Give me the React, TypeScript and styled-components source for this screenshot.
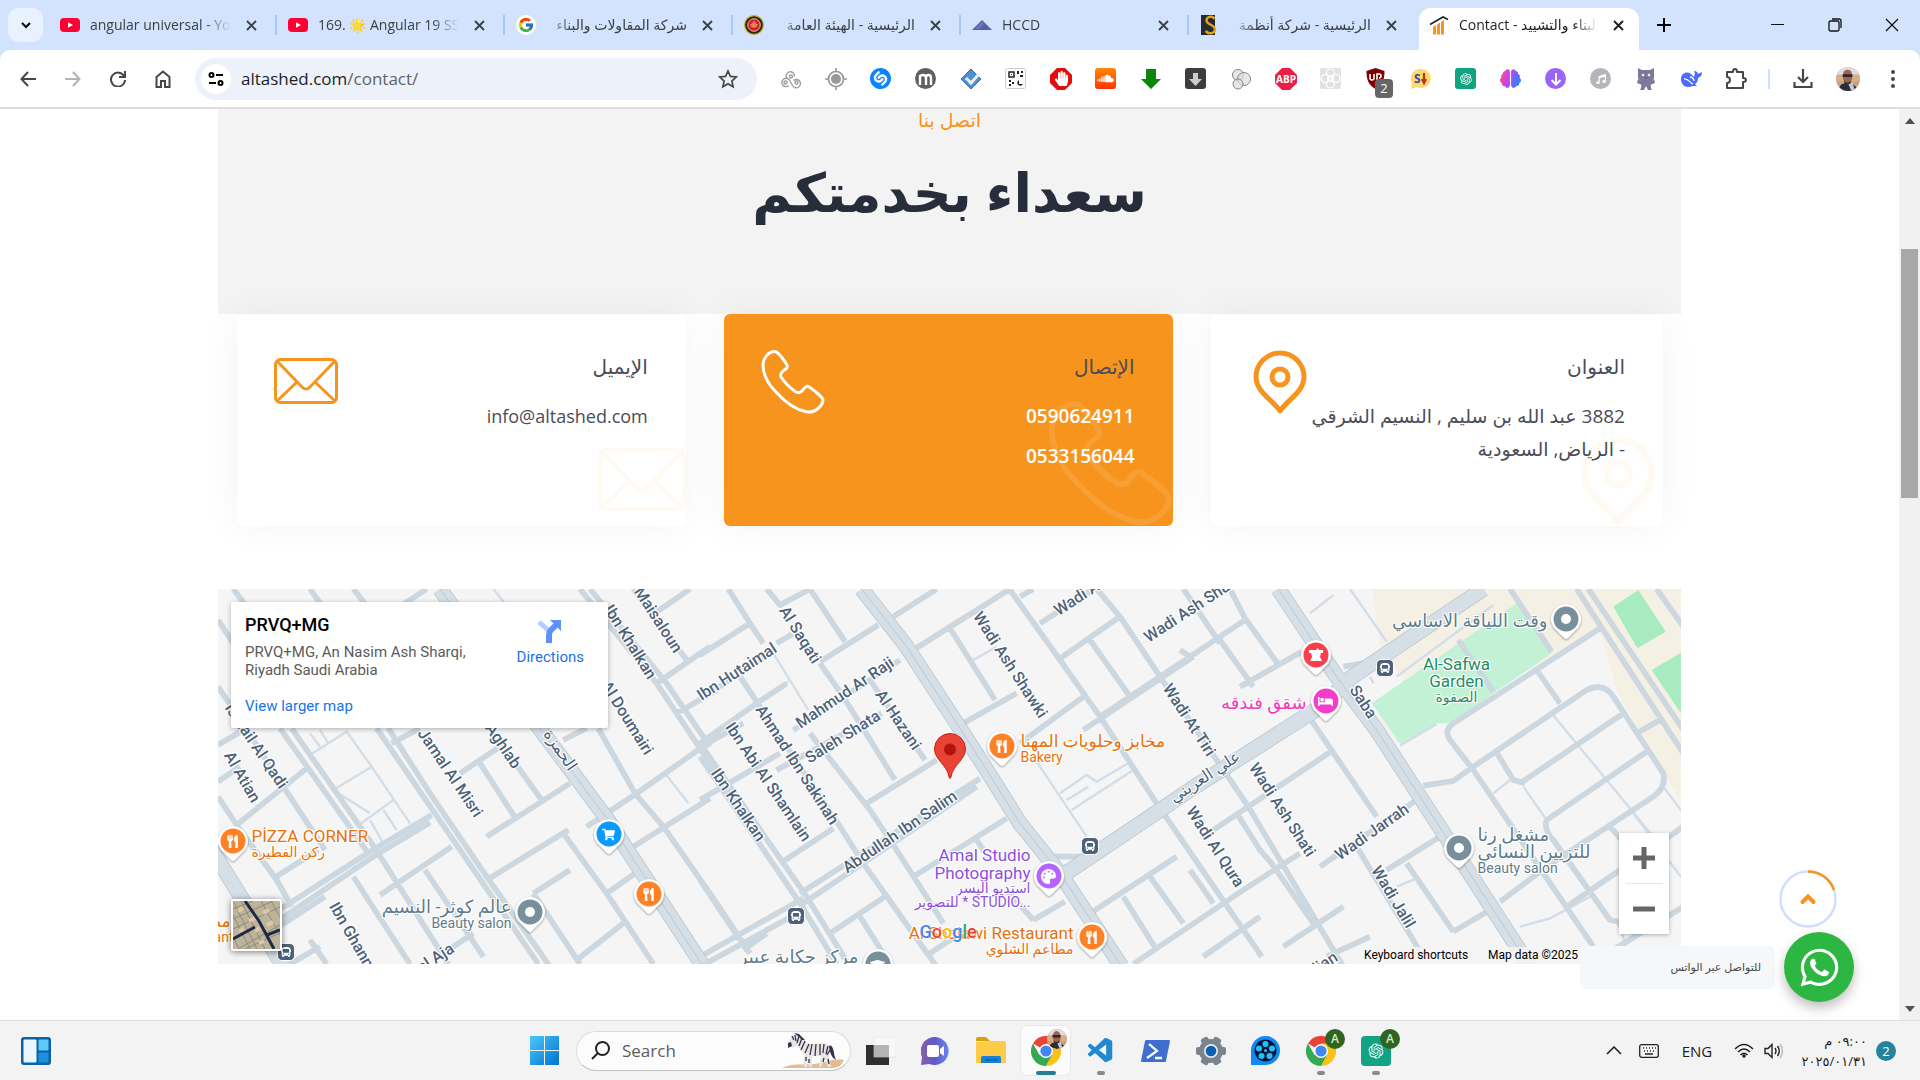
import React from "react";
import styled, { createGlobalStyle, css } from "styled-components";
import {
  FaBed,
  FaBrain,
  FaBus,
  FaHandPaper,
  FaMusic,
  FaPalette,
  FaShoppingCart,
  FaSoundcloud,
  FaUtensils,
  FaWhatsapp,
  FaGraduationCap,
} from "react-icons/fa";
import { FcGoogle } from "react-icons/fc";
import { SiShazam } from "react-icons/si";
import { RiOpenaiFill } from "react-icons/ri";
import { VscVscode } from "react-icons/vsc";

const ui = `"Open Sans", "Noto Sans", "DejaVu Sans", sans-serif`;
const mapFont = `Roboto, "DejaVu Sans", sans-serif`;
const orange = "#f7941d";

const GlobalStyle = createGlobalStyle`
  *, *::before, *::after { box-sizing: border-box; }
  body { margin: 0; font-family: ${ui}; background: #fff; overflow: hidden; }
  button { font: inherit; color: inherit; background: none; border: 0; padding: 0; cursor: pointer; }
  a { color: inherit; text-decoration: none; }
  h1, h2, h3, p { margin: 0; font-weight: 400; }
  svg { display: block; flex: none; }
`;

const Shell = styled.div`
  height: 100vh;
  display: flex;
  flex-direction: column;
`;

/* ---------- Tab strip ---------- */

const TabStrip = styled.header`
  height: 50px;
  flex: none;
  display: flex;
  background: #d3e3fd;
`;

const TabSearch = styled.button`
  width: 35px;
  height: 34px;
  margin: 8px 6px 0 8px;
  border-radius: 11px;
  background: #eaf1fe;
  display: grid;
  place-items: center;
`;

const Tab = styled.div<{ $active?: boolean; $line?: boolean }>`
  width: 228px;
  height: 34px;
  margin-top: 8px;
  padding: 0 18px 0 11px;
  display: flex;
  align-items: center;
  gap: 10px;
  font-size: 14px;
  color: #3c4043;
  position: relative;
  ${(p) =>
    p.$line &&
    css`
      &::after {
        content: "";
        position: absolute;
        right: 0;
        top: 7px;
        width: 2px;
        height: 20px;
        background: #a8c7fa;
      }
    `}
  ${(p) =>
    p.$active &&
    css`
      width: 220px;
      height: 42px;
      margin: 8px 4px 0 2px;
      padding: 0 13px 8px 10px;
      border-radius: 12px 12px 0 0;
      background: #fff;
      color: #1f1f1f;
    `}
`;

const TabTitle = styled.a<{ $rtl?: boolean }>`
  flex: 1;
  min-width: 0;
  line-height: 24px;
  overflow: hidden;
  white-space: nowrap;
  direction: ${(p) => (p.$rtl ? "rtl" : "ltr")};
  mask-image: linear-gradient(${(p) => (p.$rtl ? "to left" : "to right")}, #000 calc(100% - 26px), transparent);
`;

const TabIcon = styled.span`
  width: 20px;
  height: 20px;
  display: grid;
  place-items: center;
  flex: none;
`;

const TabClose = styled.button`
  width: 16px;
  height: 16px;
  display: grid;
  place-items: center;
  margin-left: 2px;
`;

const NewTab = styled.button`
  width: 42px;
  height: 34px;
  margin-top: 8px;
  display: grid;
  place-items: center;
`;

const WindowControls = styled.div`
  margin-left: auto;
  display: flex;
`;

const WindowButton = styled.button`
  width: 57px;
  height: 50px;
  display: grid;
  place-items: center;
`;

/* ---------- Toolbar ---------- */

const ToolbarBack = styled.div`
  flex: none;
  background: #d3e3fd;
`;

const Toolbar = styled.nav`
  height: 59px;
  padding: 0 5px;
  display: flex;
  align-items: center;
  border-bottom: 2px solid #dfdfe1;
  border-radius: 10px 10px 0 0;
  background: #fff;
`;

const Tool = styled.button`
  width: 45px;
  height: 42px;
  flex: none;
  position: relative;
  display: grid;
  place-items: center;
  color: #474747;
`;

const Omnibox = styled.div`
  flex: 1;
  height: 42px;
  margin: 0 11px 0 10px;
  padding: 0 6px;
  display: flex;
  align-items: center;
  gap: 10px;
  border-radius: 21px;
  background: #ecf1fa;
`;

const SiteInfo = styled.button`
  width: 30px;
  height: 30px;
  border-radius: 50%;
  background: #fff;
  display: grid;
  place-items: center;
`;

const Url = styled.div`
  flex: 1;
  font-size: 17px;
  line-height: 24px;
  color: #1f1f1f;
  span { color: #5f6368; }
`;

const StarButton = styled.button`
  width: 46px;
  height: 30px;
  display: grid;
  place-items: center;
  color: #474747;
`;

const ToolDivider = styled.span`
  width: 22px;
  height: 20px;
  display: grid;
  place-items: center;
  &::before { content: ""; width: 2px; height: 20px; background: #cfe0fc; }
`;

const Chip = styled.span<{ $bg: string; $round?: boolean }>`
  width: 21px;
  height: 21px;
  border-radius: ${(p) => (p.$round ? "50%" : "3px")};
  background: ${(p) => p.$bg};
  color: #fff;
  display: grid;
  place-items: center;
`;

const CountBadge = styled.span`
  position: absolute;
  right: 5px;
  bottom: 2px;
  width: 18px;
  height: 19px;
  border-radius: 4px;
  background: #666;
  color: #fff;
  font-size: 13px;
  line-height: 19px;
  text-align: center;
`;

/* ---------- Page ---------- */

const Viewport = styled.div`
  flex: 1;
  min-height: 0;
  display: flex;
`;

const Page = styled.main`
  flex: 1;
  min-width: 0;
  overflow: hidden;
  background: #fff;
`;

const Container = styled.div`
  max-width: 1463px;
  margin: 0 auto;
`;

const Hero = styled.section`
  height: 205px;
  background: #f3f3f3;
  text-align: center;
  direction: rtl;
`;

const HeroKicker = styled.p`
  color: ${orange};
  font-size: 19px;
  line-height: 22px;
`;

const HeroTitle = styled.h1`
  margin-top: 18px;
  font-size: 54px;
  line-height: 84px;
  font-weight: 700;
  color: #282d3b;
`;

const Cards = styled.section`
  display: grid;
  grid-template-columns: repeat(3, 1fr);
  gap: 38px;
  padding: 0 18px 63px 19px;
`;

const Card = styled.article<{ $filled?: boolean }>`
  position: relative;
  overflow: hidden;
  height: 212px;
  padding: 36px 38px 0 37px;
  display: flex;
  justify-content: space-between;
  border-radius: 6px;
  background: ${(p) => (p.$filled ? orange : "#fff")};
  color: ${(p) => (p.$filled ? "#fff" : "#4a4d57")};
`;

const CardShadow = styled.div`
  border-radius: 6px;
  box-shadow: 0 0 38px rgba(0, 0, 0, 0.05);
`;

const CardIcon = styled.div<{ $filled?: boolean }>`
  width: 64px;
  height: 64px;
  color: ${(p) => (p.$filled ? "#fff" : orange)};
`;

const CardBody = styled.div`
  direction: rtl;
  text-align: right;
  font-size: 19px;
  white-space: nowrap;
`;

const CardTitle = styled.h2`
  margin-bottom: 17px;
  font-size: 20px;
  line-height: 33px;
  color: #4a4d57;
`;

const CardLine = styled.p`
  line-height: 33px;
`;

const MailLink = styled.a`
  font-size: 18px;
`;

const PhoneLink = styled.a`
  display: block;
  margin-bottom: 7px;
  line-height: 33px;
  font-weight: 600;
  font-size: 19px;
`;

const Watermark = styled.div<{ $right: number; $bottom: number; $filled?: boolean }>`
  position: absolute;
  right: ${(p) => p.$right}px;
  bottom: ${(p) => p.$bottom}px;
  color: ${(p) => (p.$filled ? "#fff" : orange)};
  opacity: ${(p) => (p.$filled ? 0.1 : 0.05)};
`;

/* ---------- Map ---------- */

const MapFrame = styled.section`
  position: relative;
  height: 375px;
  overflow: hidden;
  background: #f5f5f5;
  font-family: ${mapFont};
`;

const Streets = styled.svg`
  width: 100%;
  height: 100%;
`;

type Align = "left" | "center" | "right";

const shift: Record<Align, string> = { left: "0", center: "-50%", right: "-100%" };

const MapLabel = styled.span<{
  $x: number;
  $y: number;
  $angle?: number;
  $align?: Align;
  $color?: string;
  $size?: number;
  $bold?: boolean;
}>`
  position: absolute;
  left: calc(50% - 732px + ${(p) => p.$x}px);
  top: ${(p) => p.$y}px;
  transform: translate(${(p) => shift[p.$align ?? "center"]}, -50%) rotate(${(p) => p.$angle ?? 0}deg);
  white-space: nowrap;
  font-size: ${(p) => p.$size ?? 16}px;
  font-weight: ${(p) => (p.$bold ? 500 : 400)};
  line-height: 18px;
  color: ${(p) => p.$color ?? "#4d6278"};
  text-shadow: 1px 1px 0 #fff, -1px -1px 0 #fff, 1px -1px 0 #fff, -1px 1px 0 #fff, 0 0 2px #fff;
`;

const PinSpot = styled.span<{ $x: number; $y: number }>`
  position: absolute;
  left: calc(50% - 732px + ${(p) => p.$x}px);
  top: ${(p) => p.$y}px;
  width: 32px;
  height: 38px;
  margin: -16px 0 0 -16px;
  color: #fff;
  filter: drop-shadow(0 1px 1px rgba(0, 0, 0, 0.35));
`;

const PinGlyph = styled.span`
  position: absolute;
  left: 0;
  top: 0;
  width: 32px;
  height: 32px;
  display: grid;
  place-items: center;
`;

const BusStop = styled.span<{ $x: number; $y: number }>`
  position: absolute;
  left: calc(50% - 732px + ${(p) => p.$x}px);
  top: ${(p) => p.$y}px;
  width: 18px;
  height: 18px;
  margin: -9px 0 0 -9px;
  border: 1px solid #fff;
  border-radius: 5px;
  background: #4d6278;
  color: #fff;
  display: grid;
  place-items: center;
`;

const Marker = styled.svg`
  position: absolute;
  left: calc(50% - 16px);
  top: 144px;
`;

const PlaceCard = styled.div`
  position: absolute;
  left: 13px;
  top: 13px;
  width: 377px;
  height: 126px;
  padding: 12px 15px 12px 14px;
  display: flex;
  justify-content: space-between;
  border-radius: 2px;
  background: #fff;
  box-shadow: 0 1px 5px rgba(0, 0, 0, 0.3);
  font-size: 15px;
  line-height: 18px;
  color: #5b5b5b;
`;

const PlaceName = styled.h3`
  margin-bottom: 7px;
  font-size: 18px;
  line-height: 22px;
  font-weight: 500;
  color: #000;
`;

const PlaceAddress = styled.p`
  width: 240px;
  margin-bottom: 18px;
`;

const MapLink = styled.a`
  color: #1a73e8;
`;

const Directions = styled(MapLink)`
  margin: 5px 9px 0 0;
  display: flex;
  flex-direction: column;
  align-items: center;
  gap: 5px;
`;

const Thumb = styled.button`
  position: absolute;
  left: 13px;
  top: 310px;
  width: 51px;
  height: 52px;
  border: 2px solid #fff;
  border-radius: 3px;
  overflow: hidden;
  box-shadow: 0 1px 6px rgba(0, 0, 0, 0.5);
`;

const ZoomBox = styled.div`
  position: absolute;
  right: 12px;
  top: 244px;
  width: 50px;
  display: flex;
  flex-direction: column;
  align-items: center;
  background: #fff;
  box-shadow: 0 1px 4px rgba(0, 0, 0, 0.3);
`;

const ZoomButton = styled.button`
  width: 100%;
  height: 50px;
  display: grid;
  place-items: center;
  & + & { border-top: 1px solid #e6e6e6; width: 37px; height: 51px; }
`;

const Attribution = styled.div`
  position: absolute;
  right: 0;
  bottom: 0;
  width: 321px;
  height: 17px;
  padding-left: 4px;
  display: flex;
  gap: 20px;
  background: rgba(245, 245, 245, 0.8);
  font-size: 12px;
  line-height: 17px;
  color: #000;
  white-space: nowrap;
`;

const GoogleMark = styled.div`
  position: absolute;
  left: calc(50% - 30px);
  top: 331px;
  font-size: 18px;
  font-weight: 500;
  line-height: 24px;
  text-shadow: 0 0 2px #fff, 0 0 2px #fff;
`;

const Ink = styled.span<{ $c: string }>`
  color: ${(p) => p.$c};
`;

/* ---------- Floating widgets ---------- */

const ToTop = styled.button`
  position: fixed;
  right: 83px;
  bottom: 152px;
`;

const ChatDock = styled.div`
  position: fixed;
  right: 66px;
  bottom: 78px;
  display: flex;
  align-items: center;
  gap: 9px;
`;

const ChatHint = styled.span`
  width: 195px;
  height: 43px;
  padding: 0 14px;
  border-radius: 6px;
  background: #f5f7f9;
  color: #43474e;
  font-size: 11px;
  line-height: 41px;
  direction: rtl;
  white-space: nowrap;
`;

const ChatButton = styled.a`
  width: 70px;
  height: 70px;
  border-radius: 50%;
  background: #2db742;
  color: #fff;
  display: grid;
  place-items: center;
  box-shadow: 0 6px 12px rgba(0, 0, 0, 0.25);
`;

/* ---------- Scrollbar ---------- */

const ScrollTrack = styled.div`
  width: 21px;
  flex: none;
  display: flex;
  flex-direction: column;
  align-items: center;
  background: #f1f1f1;
`;

const ScrollArrow = styled.button`
  width: 21px;
  height: 23px;
  display: grid;
  place-items: center;
`;

const ScrollThumb = styled.div`
  width: 17px;
  height: 249px;
  margin: 117px 0 auto;
  background: #a8a8a8;
`;

/* ---------- Taskbar ---------- */

const Taskbar = styled.footer`
  height: 60px;
  flex: none;
  display: grid;
  grid-template-columns: 1fr auto 1fr;
  align-items: center;
  border-top: 1px solid #dedede;
  background: #f3f3f3;
`;

const TaskLeft = styled.div`
  padding-left: 8px;
`;

const TaskCenter = styled.div`
  display: flex;
  align-items: center;
`;

const TaskCell = styled.button<{ $active?: boolean; $running?: boolean }>`
  position: relative;
  width: ${(p) => (p.$active ? 49 : 55)}px;
  height: 49px;
  margin: 0 ${(p) => (p.$active ? 3 : 0)}px;
  border-radius: 6px;
  display: grid;
  place-items: center;
  background: ${(p) => (p.$active ? "#fbfbfb" : "transparent")};
  box-shadow: ${(p) => (p.$active ? "0 0 0 1px #e8e8e8" : "none")};
  ${(p) =>
    (p.$active || p.$running) &&
    css`
      &::after {
        content: "";
        position: absolute;
        bottom: 0;
        left: 50%;
        transform: translateX(-50%);
        width: ${p.$active ? 20 : 8}px;
        height: 4px;
        border-radius: 2px;
        background: ${p.$active ? "#267f90" : "#8a8a8a"};
      }
    `}
`;

const UserBadge = styled.span<{ $bg: string }>`
  position: absolute;
  right: 3px;
  top: 3px;
  width: 20px;
  height: 20px;
  border-radius: 50%;
  overflow: hidden;
  background: ${(p) => p.$bg};
  color: #d9e8d0;
  font-size: 12px;
  line-height: 20px;
  font-weight: 600;
  text-align: center;
`;

const SearchBox = styled.label`
  width: 275px;
  height: 40px;
  margin: 0 2px 0 4px;
  padding: 0 6px 0 14px;
  display: flex;
  align-items: center;
  gap: 12px;
  border: 1px solid #dcdcdc;
  border-bottom-color: #c4c4c4;
  border-radius: 20px;
  background: #fcfcfc;
`;

const SearchInput = styled.input`
  flex: 1;
  min-width: 0;
  border: 0;
  outline: 0;
  padding: 0;
  background: none;
  font-family: ${ui};
  font-size: 17px;
  color: #5c5c5c;
  &::placeholder { color: #5c5c5c; opacity: 1; }
`;

const Tray = styled.div`
  display: flex;
  align-items: center;
  justify-content: flex-end;
  padding-right: 24px;
  color: #1b1b1b;
`;

const TrayItem = styled.button<{ $w: number }>`
  width: ${(p) => p.$w}px;
  height: 48px;
  display: grid;
  place-items: center;
  font-size: 15px;
`;

const Clock = styled.button`
  width: 80px;
  font-size: 13px;
  line-height: 20px;
  white-space: nowrap;
  span { display: block; direction: rtl; text-align: right; }
`;

const NoticeBadge = styled.button`
  width: 20px;
  height: 20px;
  margin-left: 9px;
  border-radius: 50%;
  background: #23849a;
  color: #fff;
  font-size: 13px;
  line-height: 20px;
`;

/* ---------- Drawings ---------- */

const CloseX = () => (
  <svg width="11" height="11" viewBox="0 0 11 11" stroke="currentColor" strokeWidth="1.9">
    <path d="M1 1l9 9M10 1l-9 9" />
  </svg>
);

const YouTubeMark = () => (
  <svg width="20" height="14" viewBox="0 0 20 14">
    <rect width="20" height="14" rx="4" fill="#ff0033" />
    <path d="M8 4.200l5 2.800-5 2.800z" fill="#fff" />
  </svg>
);

const GoogleRound = () => (
  <svg width="20" height="20" viewBox="0 0 20 20">
    <circle cx="10" cy="10" r="10" fill="#fff" />
    <g transform="translate(1.5 1.5)">
      <FcGoogle size={17} />
    </g>
  </svg>
);

const EmblemMark = () => (
  <svg width="20" height="20" viewBox="0 0 20 20">
    <circle cx="10" cy="10" r="9.4" fill="#2a2413" stroke="#c9b32a" strokeWidth="1.2" />
    <circle cx="10" cy="10" r="6.3" fill="#d9202a" stroke="#f2ece0" strokeWidth=".8" />
    <path d="M10 5.5l2 3 2 1-2 3H8L6 9.500l2-1z" fill="#f0834c" />
  </svg>
);

const TriangleMark = () => (
  <svg width="20" height="20" viewBox="0 0 20 20">
    <path d="M0 15L10 5l10 10z" fill="#5a5da8" />
    <path d="M3 14l7-7 2 2-5 5z" fill="#7377bd" />
  </svg>
);

const GoldSMark = () => (
  <svg width="20" height="20" viewBox="0 0 20 20">
    <rect width="14" height="20" x="1" fill="#262b33" />
    <path d="M14.500 4C13 .8 6.500 1 6.500 5.500c0 4.500 8.500 4 8.500 8.800 0 4.700-7.500 5.200-9 1.500" fill="none" stroke="#e6a21c" strokeWidth="2.400" />
  </svg>
);

const BuildMark = () => (
  <svg width="20" height="20" viewBox="0 0 20 20">
    <path d="M4 19.500V12l3-2v9.500zM8 19.500V9.500l3-2v12zM12 19.500V7l3-2v14.500z" fill={orange} />
    <path d="M1 9.500L14 2l5 2.500" fill="none" stroke="#222" strokeWidth="1.600" />
  </svg>
);

const Portrait = ({ size }: { size: number }) => (
  <svg width={size} height={size} viewBox="0 0 25 25">
    <defs>
      <clipPath id={`face${size}`}>
        <circle cx="12.500" cy="12.500" r="12.500" />
      </clipPath>
    </defs>
    <g clipPath={`url(#face${size})`}>
      <rect width="25" height="25" fill="#c9a183" />
      <rect width="25" height="8" fill="#e0dce0" />
      <path d="M0 9h8v6H0zM17 8h8v7h-8z" fill="#d8ae88" />
      <path d="M3 25c0-7 4-8 8-8s10 1 12 8z" fill="#2b2c3a" />
      <path d="M13 18l4-2 3 9h-4z" fill="#c5c8d4" />
      <ellipse cx="12" cy="9.500" rx="5" ry="7" fill="#9b664d" />
      <path d="M7 7.500h10v3H7z" fill="#2d2530" />
      <path d="M8 12.500c1 5 7 5 8 0l-1 5h-6z" fill="#3b2824" />
    </g>
  </svg>
);

const MailArt = ({ w, h }: { w: number; h: number }) => (
  <svg width={w} height={h} viewBox="0 0 64 46" fill="none" stroke="currentColor" strokeWidth="3">
    <rect x="1.500" y="1.500" width="61" height="43" rx="5" />
    <path d="M3 3l25 26c3 3 5 3 8 0L61 3M3 43l20-19M61 43L41 24" />
  </svg>
);

const PhoneArt = ({ size }: { size: number }) => (
  <svg width={size} height={size} viewBox="0 0 64 64" fill="none" stroke="currentColor" strokeWidth="3" strokeLinejoin="round">
    <path d="M13 1.500C8 1.500 2 8 2 15C2 25 8 35 15 42C24 52 35 60 46 62C55 63 62 55 62 50C62 47 50 38 48 37C46 35 43 38 41 41C39 43 37 43 35 42C29 38 24 33 20 27C19 25 20 23 22 21C25 19 27 18 26 15C23 10 18 4 16 2.500C15 1.500 14 1.500 13 1.500Z" />
  </svg>
);

const PinArt = ({ size }: { size: number }) => (
  <svg width={size} height={size} viewBox="0 0 64 64" fill="none" stroke="currentColor" strokeWidth="5">
    <path d="M32 61C25 50 8 42 8 27a24 24 0 0 1 48 0c0 15-17 23-24 34z" strokeLinejoin="round" />
    <circle cx="32" cy="27" r="8" />
  </svg>
);

const ChromeArt = () => (
  <svg width="30" height="30" viewBox="0 0 30 30">
    <path d="M15 15L2 7.500A15 15 0 0 1 28 7.500z" fill="#ea4335" />
    <path d="M2 7.500L8.500 19 15 15l6.500 3.800L15 30A15 15 0 0 1 2 7.500z" fill="#34a853" />
    <path d="M28 7.500H15V15l6.500 3.800L15 30A15 15 0 0 0 28 7.500z" fill="#fbc116" />
    <circle cx="15" cy="15" r="7" fill="#fff" />
    <circle cx="15" cy="15" r="5.600" fill="#4285f4" />
  </svg>
);

const ZebraArt = () => (
  <svg width="62" height="36" viewBox="0 0 62 36">
    <path d="M0 35c10-5 20-3 32-4 12-1 18-6 30-4-2 5-6 8-12 8z" fill="#e3bd90" />
    <path d="M6 10l4-7 4-2 5 2 7 8 14-1c6 0 9 3 9 8l-2 5 2 11h-3l-3-9-4 9h-2l2-11-9 0 0 11h-3l-1-10-1 10h-3V21l-6-8-6 2z" fill="#e9e4e4" />
    <path d="M10 3l2 4M13 2l1 6M17 3l-2 7M20 5l-3 8M23 8l-4 9M27 11l-4 9M30 11l-2 11M34 11l-1 12M38 11v11M42 11l-1 9M46 13l-2 8M48 17l-3 5M24 24v4M27 26v4M42 25l-1 4M46 26l1 5" stroke="#37304a" strokeWidth="1.300" fill="none" />
    <path d="M6 10l3-1 1 4-4 2zM12 0l5 1 6 6-3 0-4-4zM48 12c5 3 3 9 6 15-5-3-6-8-7-13z" fill="#37304a" />
  </svg>
);

const CatArt = () => (
  <svg width="20" height="22" viewBox="0 0 20 22" fill="#81779c">
    <path d="M2 0l4 2h8l4-2v9q0 3-4 4H6q-4-1-4-4z" />
    <path d="M6 12h8l1 8 1 2h-4l-2-4-2 4H4l1-2z" />
    <path d="M6 13l-4-2-1 4 5 2M14 13l4-2 1 4-5 2" />
    <circle cx="7" cy="7" r="1.300" fill="#f1eef8" />
    <circle cx="13" cy="7" r="1.300" fill="#f1eef8" />
    <path d="M9 9h2l-1 1.500z" fill="#4d4566" />
  </svg>
);

/* ---------- Map data ---------- */

const avenues = [
  "M690 27L985 440 1190 715 1475 1152",
  "M1955 27L2090 200 2240 430 2330 570 2430 730 2550 880 2735 1160",
  "M3205 27L3380 290 3500 450 3630 650 3960 1160",
  "M2560 885L2970 610 3340 375 3420 295 3820 27",
  "M0 800L80 930 220 1160",
];

const streets = `
M70 27L110 80M300 27L345 90M430 27L480 90M650 27L570 80M24 120L70 190
M210 445L475 820M245 445L500 812 715 1152M500 445L985 1152M535 445L660 640 830 890 1020 1160
M24 320L110 450 240 650 345 810M24 495L100 450M24 650L80 735 200 900 245 980M24 605L90 560M80 735L290 565
M190 895L325 810M215 985L480 815 665 705M215 1015L490 830 660 728M215 1035L345 950M510 945L725 800
M430 890L520 1030 600 1152M645 870L820 1130M830 900L1075 750M750 580L870 500M830 770L1080 610M545 490L630 445
M810 550L920 720M880 500L995 660M1060 480L1130 445M1130 740L1280 640 1500 485 1600 430M1270 800L1500 655
M1165 445L1275 640 1360 740 1500 940 1620 1120M1060 760L1190 940 1330 1152M1190 940L1290 870M970 940L1110 1152
M970 940L1080 870M1100 1140L1240 1030M1110 27L1340 310 1500 550 1620 730M1140 27L1370 310 1500 500M1340 310L1500 200M1400 400L1520 330
M1270 27L1430 240M1320 110L1440 27M240 1152L330 1100M300 1080L350 1152M700 1120L790 1060
M1555 27L1620 130 1660 190M1620 130L1470 225M1670 27L1710 75 1800 27M1800 27L1905 185M1830 245L2005 135M1700 190L1750 160
M1470 360L1700 205M1470 490L1640 370 1730 310M1590 290L1890 740 1960 850 2180 1160M1830 250L1900 350 2055 600
M1800 460L1980 690 2060 810 2200 1030M1750 450L2070 240M1700 570L2015 400M1970 670L2180 540M1470 660L1710 520
M1980 300L2145 540M1470 530L1770 970 1880 1152M1470 490L1790 950 1915 1152M1780 970L2300 620M1770 940L2310 595
M1470 1130L1780 955M1470 1160L1790 985M1710 850L1870 745M1470 900L1610 1110M1600 1110L1670 1060M1860 1060L2025 950
M1950 1010L2040 1152M2110 890L2390 715M2300 780L2340 840M2160 1120L2250 1060M2470 1020L2565 965M2390 930L2470 1020
M2050 110L2180 27M2110 210L2400 27M2260 430L2420 340M2220 145L2355 360M2400 30L2550 240 2670 410 2840 670 3155 1130
M2430 490L2620 350M2490 130L2650 27M2550 235L2730 110M2640 180L2760 350M2660 27L2730 110 2850 290 3115 680 3400 1160
M2670 410L2850 290 3105 120M2430 50L2470 27M2920 27L3030 190M2640 1000L2900 830M2740 950L2840 1110M2820 890L2920 1030
M2770 1152L3100 930 3270 820M3060 27L3105 115 3210 260M3030 180L3130 320M2940 230L2910 210M3090 320L3275 215
M2620 450L2950 230M3290 400L3500 710M3010 750L3370 510M3330 860L3620 660M3530 870L3690 770M3440 800L3640 1130
M3080 700L3150 810 3185 850 3310 1030M3220 1100L3400 980M2980 1130L3150 1010M2940 870L3010 970M3350 1130L3480 1070
M3730 1055L3840 990M3590 850L3730 1055M3745 180L3850 335M3900 27L4025 215M4100 27L4420 520M4135 27L4420 450M4340 27L4420 140
M3640 617L3730 603 3790 560 4130 330Q4180 305 4210 350L4360 580Q4370 620 4330 650L4010 860 3870 965
M4170 145L3730 430Q3700 450 3720 480L3790 570 3980 850 4150 1100M3980 270L4050 370
M3930 610L4240 400M3855 510L3910 600 3945 610M4010 720L4310 515M4010 720Q4000 750 4030 780L4200 1020 4250 1030
M4070 980L4420 740M4280 460L4350 420M4160 1140L4420 980M4200 740L4280 830M3400 260L3460 250 3520 240M2520 830L2640 830`;

const lanes = `
M300 525L410 455 485 560 600 730M485 560L370 630M370 630L480 700M300 460L330 500M330 450L355 490
M480 720L520 790M520 690L560 750M440 740L550 660M1365 580L1435 670M850 27L900 90M1280 650L1360 740
M1690 220L1795 390M1640 370L1735 305M2290 240L2360 200M2550 640L2630 585 2660 605 2755 550M2585 690L2770 570
M2470 530L2630 770M2570 660L2635 620M3300 100L3370 45M3420 27L3530 185M3560 290L3850 75M3480 290L3490 310
M3560 920L3620 895M4025 400L4330 770M3940 620L4010 720M4270 700L4420 900M3930 1040L4020 1015 4140 950M4360 620L4420 700M3850 640L3900 600
M3570 497L3680 432M4220 1020L4250 1100`;

const streetNames: [string, number, number, number][] = [
  ["Maisaloun", 440, 31, 57],
  ["Ibn Khalkan", 412, 53, 58],
  ["Al Doumairi", 409, 129, 58],
  ["Ibn Hutaimal", 519, 83, -33],
  ["Ismail Al Qadi", 38, 157, 56],
  ["Al Atian", 24, 188, 60],
  ["Jamal Al Misri", 232, 184, 56],
  ["Aghlab", 285, 157, 56],
  ["الحمزة", 342, 161, 56],
  ["Ibn Ghannam", 139, 356, 60],
  ["Bilal Aja", 210, 374, -33],
  ["Al Saqati", 582, 46, 58],
  ["Mahmud Ar Raji", 627, 104, -34],
  ["Saleh Shata", 625, 148, -32],
  ["Al Hazani", 680, 131, 56],
  ["Ahmad Ibn Sakinah", 579, 176, 57],
  ["Ibn Abi Al Shamlain", 550, 193, 56],
  ["Ibn Khalkan", 520, 216, 56],
  ["Abdullah Ibn Salim", 682, 243, -34],
  ["Wadi Ash Shawki", 792, 76, 57],
  ["Wadi Arar", 867, 4, -33],
  ["Wadi Ash Shura", 975, 19, -33],
  ["Wadi At Tiri", 971, 131, 57],
  ["علي العريني", 987, 188, -33],
  ["Saba", 1145, 113, 57],
  ["Wadi Ash Shati", 1064, 221, 57],
  ["Wadi Al Qura", 997, 258, 57],
  ["Wadi Jarrah", 1154, 243, -35],
  ["Wadi Jalil", 1175, 308, 59],
  ["Wadi Radian", 1081, 391, -33],
];

const food = "#e8710a";
const slate = "#5f7d8c";
const violet = "#8c50e0";
const park = "#1e8f63";

const places: [string, number, number, Align, string, number][] = [
  ["PİZZA CORNER", 34, 247, "left", food, 17],
  ["ركن الفطيرة", 34, 263, "left", food, 14],
  ["مطعم", 13, 332, "right", food, 17],
  ["Restaurant", 16, 348, "right", food, 14],
  ["عالم كوثر- النسيم", 294, 318, "right", slate, 18],
  ["Beauty salon", 294, 334, "right", slate, 14],
  ["مخابز وحلويات المهنا", 803, 152, "left", food, 17],
  ["Bakery", 803, 168, "left", food, 14],
  ["Amal Studio", 813, 266, "right", violet, 17],
  ["Photography", 813, 284, "right", violet, 17],
  ["استديو اليسر", 813, 299, "right", violet, 14],
  ["للتصوير * STUDIO...", 813, 313, "right", violet, 14],
  ["Al Shalawi Restaurant", 856, 344, "right", food, 17],
  ["مطاعم الشلوي", 856, 360, "right", food, 14],
  ["مركز حكاية عبير", 641, 368, "right", slate, 18],
  ["وقت اللياقة الاساسي", 1330, 32, "right", slate, 18],
  ["شقق فندقه", 1089, 114, "right", "#f538b8", 18],
  ["Al-Safwa", 1239, 75, "center", park, 17],
  ["Garden", 1239, 92, "center", park, 17],
  ["الصفوة", 1239, 108, "center", park, 14],
  ["مشغل رنا", 1260, 246, "left", slate, 18],
  ["للتزيين النسائي", 1260, 263, "left", slate, 18],
  ["Beauty salon", 1260, 279, "left", slate, 14],
];

const dot = <svg width="10" height="10"><circle cx="5" cy="5" r="5" fill="#fff" /></svg>;
const jar = (
  <svg width="16" height="16" viewBox="0 0 16 16" fill="#fff">
    <path d="M1 3h7l2-2 1 2h4v3h-2l-1 4 2 4H2l2-4-1-4H1z" />
  </svg>
);

const pins: [number, number, string, React.ReactNode][] = [
  [15, 252, "#ff8126", <FaUtensils size={13} />],
  [391, 245, "#0a99ff", <FaShoppingCart size={13} />],
  [431, 305, "#ff8126", <FaUtensils size={13} />],
  [312, 323, "#78909c", dot],
  [784, 157, "#ff8126", <FaUtensils size={13} />],
  [831, 287, "#b366ff", <FaPalette size={15} />],
  [874, 348, "#ff8126", <FaUtensils size={13} />],
  [660, 375, "#78909c", <FaGraduationCap size={15} />],
  [1348, 30, "#78909c", dot],
  [1098, 66, "#fb3e4b", jar],
  [1108, 112, "#f53dcb", <FaBed size={15} />],
  [1241, 259, "#78909c", dot],
];

const stops: [number, number][] = [
  [68, 363],
  [872, 257],
  [578, 327],
  [1167, 79],
];

const MapPanel = () => (
  <MapFrame aria-label="Map">
    <Streets viewBox="24 27 4389 1125" preserveAspectRatio="xMidYMid slice" fill="none">
      <path d="M3485 27L3510 200 3580 300 3500 400 3560 490 4170 150 4220 330 4420 680 4420 27z" fill="#f5f0e4" />
      <path d="M3485 370L3920 70 4025 220 3720 430 3680 430 3575 497z" fill="#c3f1d5" />
      <path d="M4210 80L4285 30 4367 155 4282 205zM4325 270L4420 214 4420 410z" fill="#a8ebc1" />
      <path d={lanes} stroke="#d2dde8" strokeWidth="7" />
      <path d={streets} stroke="#ccd7df" strokeWidth="17" strokeLinejoin="round" />
      {avenues.map((d) => (
        <path key={d} d={d} stroke="#b9c8d2" strokeWidth="47" strokeLinejoin="round" />
      ))}
      {avenues.map((d) => (
        <path key={d} d={d} stroke="#d6dfe6" strokeWidth="42" strokeLinejoin="round" />
      ))}
      {avenues.slice(0, 3).map((d) => (
        <path key={d} d={d} stroke="#bccad4" strokeWidth="3" />
      ))}
    </Streets>
    {streetNames.map(([name, x, y, a]) => (
      <MapLabel key={name + x} $x={x} $y={y} $angle={a} $bold>{name}</MapLabel>
    ))}
    {places.map(([name, x, y, align, color, size]) => (
      <MapLabel key={name + x} $x={x} $y={y} $align={align} $color={color} $size={size}>{name}</MapLabel>
    ))}
    {stops.map(([x, y]) => (
      <BusStop key={x} $x={x} $y={y}><FaBus size={10} /></BusStop>
    ))}
    {pins.map(([x, y, color, glyph]) => (
      <PinSpot key={x} $x={x} $y={y}>
        <svg width="32" height="38" viewBox="0 0 32 38">
          <path d="M16 1a15 15 0 0 1 9 27l-7 7q-2 2-4 0l-7-7A15 15 0 0 1 16 1z" fill="#fff" />
          <circle cx="16" cy="16" r="12.500" fill={color} />
        </svg>
        <PinGlyph>{glyph}</PinGlyph>
      </PinSpot>
    ))}
    <Marker width="32" height="46" viewBox="0 0 32 46">
      <path d="M16 .5A15.500 15.500 0 0 0 .5 16c0 11 13 16 14.500 28q1 3 2 0C18.500 32 31.500 27 31.500 16A15.500 15.500 0 0 0 16 .5z" fill="#ea4335" stroke="#c5221f" />
      <circle cx="16" cy="16.500" r="6" fill="#b31412" />
    </Marker>
    <PlaceCard>
      <div>
        <PlaceName>PRVQ+MG</PlaceName>
        <PlaceAddress>PRVQ+MG, An Nasim Ash Sharqi, Riyadh Saudi Arabia</PlaceAddress>
        <MapLink href="#map">View larger map</MapLink>
      </div>
      <Directions href="#directions">
        <svg width="26" height="24" viewBox="0 0 26 24">
          <path d="M2 3l10 9" stroke="#b3cdfd" strokeWidth="5" />
          <path d="M12 24v-8q0-3 2-5l5-5" stroke="#5c91fa" strokeWidth="6" fill="none" />
          <path d="M13 1h11v11z" fill="#5c91fa" />
        </svg>
        Directions
      </Directions>
    </PlaceCard>
    <Thumb aria-label="Show satellite imagery">
      <svg width="47" height="48" viewBox="0 0 47 48">
        <rect width="47" height="48" fill="#bdb398" />
        <path d="M0 8l20-8M0 18L40 0M0 28L47 6M5 48L47 24M12 48L47 32M0 0l24 48M8 0l24 48M28 0l19 34M38 0l9 16M0 14l17 34M0 36l6 12" stroke="#8e8a7e" strokeWidth="1" />
        <path d="M5 10l5-3M16 20l6-3M30 12l6-3M22 30l5-3M6 30l5-2M34 24l6-3M26 42l5-2" stroke="#dcc8a6" strokeWidth="4" />
        <path d="M12 0l14 20 15 28M0 38l22-12M34 34l13-5" stroke="#1d2a45" strokeWidth="3" fill="none" />
      </svg>
    </Thumb>
    <ZoomBox>
      <ZoomButton aria-label="Zoom in">
        <svg width="22" height="22" stroke="#666" strokeWidth="5"><path d="M11 0v22M0 11h22" /></svg>
      </ZoomButton>
      <ZoomButton aria-label="Zoom out">
        <svg width="22" height="22" stroke="#666" strokeWidth="5"><path d="M0 11h22" /></svg>
      </ZoomButton>
    </ZoomBox>
    <Attribution>
      <button>Keyboard shortcuts</button>
      <span>Map data ©2025</span>
    </Attribution>
    <GoogleMark>
      <Ink $c="#4285f4">G</Ink><Ink $c="#ea4335">o</Ink><Ink $c="#fbbc05">o</Ink>
      <Ink $c="#4285f4">g</Ink><Ink $c="#34a853">l</Ink><Ink $c="#ea4335">e</Ink>
    </GoogleMark>
  </MapFrame>
);

const tabs: { title: string; icon: React.ReactNode; rtl?: boolean }[] = [
  { title: "angular universal - YouTube", icon: <YouTubeMark /> },
  { title: "169. 🌟 Angular 19 SSR", icon: <YouTubeMark /> },
  { title: "شركة المقاولات والبناء", icon: <GoogleRound />, rtl: true },
  { title: "الرئيسية - الهيئة العامة", icon: <EmblemMark />, rtl: true },
  { title: "HCCD", icon: <TriangleMark /> },
  { title: "الرئيسية - شركة أنظمة", icon: <GoldSMark />, rtl: true },
];

const line = { fill: "none", stroke: "currentColor", strokeWidth: 2 } as const;

const extensions: [string, React.ReactNode][] = [
  ["Cloud rings", <svg width="22" height="20" viewBox="0 0 22 20" fill="none" stroke="#9aa0a0" strokeWidth="1.400"><path d="M7 9.500a4.200 4.200 0 1 1 7.500-2" /><circle cx="11" cy="7.500" r="1.500" /><path d="M9 16.500a4.200 4.200 0 1 1 .5-5.500l3 5.500a4.200 4.200 0 1 0 1-5" /><circle cx="5.500" cy="13.500" r="1.500" /><circle cx="16.500" cy="13.500" r="1.500" /></svg>],
  ["Locator", <svg width="22" height="22" viewBox="0 0 22 22" fill="none" stroke="#999" strokeWidth="1.700"><circle cx="11" cy="11" r="7.500" /><circle cx="11" cy="11" r="5" fill="#999" stroke="none" /><path d="M11 0v4M11 18v4M0 11h4M18 11h4" /></svg>],
  ["Shazam", <SiShazam size={21} color="#0a85ff" />],
  ["Momentum", <Chip $bg="#5f5f5f" $round><svg width="15" height="12" viewBox="0 0 15 12" fill="none" stroke="#fff" strokeWidth="2.400"><path d="M2 12V2M2 5q0-3 3-3t3 3v7M8 5q0-3 2.500-3T13 5v7" /></svg></Chip>],
  ["Checker", <svg width="22" height="22" viewBox="0 0 22 22"><path d="M11 1l10 10-10 10L1 11z" fill="#4f8fd0" stroke="#3d6fa3" /><path d="M6 10l5 5 8-9" stroke="#eee" strokeWidth="3" fill="none" /></svg>],
  ["QR code", <svg width="21" height="21" viewBox="0 0 21 21"><rect x=".5" y=".5" width="20" height="20" rx="2" fill="#fff" stroke="#ccc" /><path d="M4 4h5v5H4z" fill="none" stroke="#222" strokeWidth="1.500" /><path d="M6 6h1v1H6zM12 3h2v3h-2zM16 3h2v2h-2zM15 7h3v2h-3zM4 12h2v2H4zM7 14h2v2H7zM4 16h2v2H4z" fill="#222" /><path d="M14 12a3 3 0 1 0 4 4h-4z" fill="#222" /></svg>],
  ["Blocker", <svg width="22" height="22" viewBox="0 0 22 22"><path d="M7 0h8l7 7v8l-7 7H7l-7-7V7z" fill="#e40d0d" /><g transform="translate(4 3)"><FaHandPaper size={15} color="#fff" /></g></svg>],
  ["SoundCloud", <Chip $bg="linear-gradient(#ff8a00,#ff3300)"><FaSoundcloud size={17} /></Chip>],
  ["Green download", <svg width="22" height="22" viewBox="0 0 22 22" fill="#0b860b"><path d="M6 1h10v10h5L11 21 1 11h5z" /></svg>],
  ["Dark download", <Chip $bg="#3d3d3d"><svg width="13" height="14" viewBox="0 0 13 14" fill="#ccc"><path d="M4 1h5v6h4l-6.500 7L0 7h4z" /></svg></Chip>],
  ["Circles", <svg width="22" height="22" viewBox="0 0 22 22" fill="#ddd" fillOpacity=".7" stroke="#888"><circle cx="8" cy="7" r="5.500" /><circle cx="14" cy="11" r="6.500" /><circle cx="8" cy="16" r="5" /></svg>],
  ["Adblock Plus", <svg width="22" height="22" viewBox="0 0 22 22"><path d="M7 0h8l7 7v8l-7 7H7l-7-7V7z" fill="#ed1e45" /><text x="11" y="14.500" textAnchor="middle" fontSize="10" fontWeight="700" fill="#fff" fontFamily="Open Sans">ABP</text></svg>],
  ["Lattice", <svg width="21" height="21" viewBox="0 0 21 21"><rect width="21" height="21" rx="2" fill="#e2e2e2" /><g fill="none" stroke="#fff" strokeWidth="1.200"><circle cx="10.500" cy="10.500" r="3" /><circle cx="10.500" cy="5" r="4" /><circle cx="10.500" cy="16" r="4" /><circle cx="5" cy="10.500" r="4" /><circle cx="16" cy="10.500" r="4" /></g></svg>],
  ["uBlock", <><svg width="21" height="21" viewBox="0 0 21 21"><path d="M10.500 0l9 3c0 9-2 14-9 18-7-4-9-9-9-18z" fill="#800000" /><path d="M5 6v4q0 2 2 2t2-2V6M12 13V6h2q2 0 2 2t-2 2" stroke="#fff" strokeWidth="1.600" fill="none" /></svg><CountBadge>2</CountBadge></>],
  ["Subtitles", <svg width="21" height="22" viewBox="0 0 21 22"><path d="M11 1a9.500 9.500 0 1 1-4 18l-6 2 1-6A9.500 9.500 0 0 1 11 1z" fill="#fbdc6a" /><text x="4" y="15" fontSize="12" fontWeight="700" fill="#3949ab" fontFamily="Open Sans">S</text><path d="M14 5v10M12 11l2 4 2-4" stroke="#c62828" strokeWidth="2.200" fill="none" /></svg>],
  ["ChatGPT", <Chip $bg="#10a37f"><RiOpenaiFill size={14} /></Chip>],
  ["Brain", <svg width="22" height="22" viewBox="0 0 22 22"><defs><linearGradient id="brain" gradientUnits="userSpaceOnUse" x1="0" y1="0" x2="576" y2="200"><stop offset="0" stopColor="#ff5a5f" /><stop offset=".45" stopColor="#d43fe8" /><stop offset="1" stopColor="#2f80ff" /></linearGradient></defs><FaBrain size={21} fill="url(#brain)" /></svg>],
  ["Purple download", <Chip $bg="#9c63fb" $round><svg width="12" height="14" viewBox="0 0 12 14" fill="none" stroke="#fff" strokeWidth="2"><path d="M6 1v11M1.500 8L6 12.500 10.500 8" /></svg></Chip>],
  ["Music", <Chip $bg="#b3b6ba" $round><FaMusic size={10} /></Chip>],
  ["Cat", <CatArt />],
  ["Whale", <svg width="22" height="20" viewBox="0 0 22 20"><path d="M1 10c0-6 6-8 10-5l3 3c1-3 1-4 0-6 3 0 4 2 4 3l4-2c0 4-2 5-4 6 0 3-1 5-3 6l2 2h-4C6 20 1 16 1 10z" fill="#4d6bfe" /><path d="M4 10c4-1 6 4 9 5M10 8c2 0 4 2 4 4" stroke="#fff" strokeWidth="1.300" fill="none" /></svg>],
  ["Extensions", <svg width="22" height="22" viewBox="0 0 22 22" {...line} strokeLinejoin="round"><path d="M2 4h6q0-3 2-3t2 3h6v6q3 0 3 2t-3 2v6H2v-5q3 0 3-3T2 9z" /></svg>],
];

export default function App() {
  return (
    <>
      <GlobalStyle />
      <Shell>
        <TabStrip>
          <TabSearch aria-label="Search tabs">
            <svg width="10" height="8" viewBox="0 0 10 8" {...line}><path d="M1 2l4 4 4-4" /></svg>
          </TabSearch>
          {tabs.map((t, i) => (
            <Tab key={t.title} $line={i < 5}>
              <TabIcon>{t.icon}</TabIcon>
              <TabTitle href="#tab" $rtl={t.rtl}>{t.title}</TabTitle>
              <TabClose aria-label="Close tab"><CloseX /></TabClose>
            </Tab>
          ))}
          <Tab $active>
            <TabIcon><BuildMark /></TabIcon>
            <TabTitle href="#tab">Contact - البناء والتشييد</TabTitle>
            <TabClose aria-label="Close tab"><CloseX /></TabClose>
          </Tab>
          <NewTab aria-label="New tab">
            <svg width="14" height="14" {...line}><path d="M7 0v14M0 7h14" /></svg>
          </NewTab>
          <WindowControls>
            <WindowButton aria-label="Minimize">
              <svg width="13" height="2" fill="none" stroke="#111" strokeWidth="1"><path d="M0 .5h13" /></svg>
            </WindowButton>
            <WindowButton aria-label="Restore">
              <svg width="14" height="14" viewBox="0 0 14 14" fill="none" stroke="#111" strokeWidth="1.300"><rect x="1" y="3" width="10" height="10" rx="1.500" /><path d="M4 1h7q2 0 2 2v7" /></svg>
            </WindowButton>
            <WindowButton aria-label="Close">
              <svg width="14" height="14" fill="none" stroke="#111" strokeWidth="1.300"><path d="M1 1l12 12M13 1L1 13" /></svg>
            </WindowButton>
          </WindowControls>
        </TabStrip>

        <ToolbarBack>
          <Toolbar>
            <Tool aria-label="Back"><svg width="16" height="16" {...line}><path d="M16 8H2M8 1L1.500 8 8 15" /></svg></Tool>
            <Tool aria-label="Forward"><svg width="16" height="16" {...line} stroke="#b4b4b4"><path d="M0 8h14M8 1l6.500 7L8 15" /></svg></Tool>
            <Tool aria-label="Reload"><svg width="16" height="16" {...line}><path d="M14 5A7 7 0 1 0 15 9M15 0v6H9" /></svg></Tool>
            <Tool aria-label="Home"><svg width="16" height="18" {...line}><path d="M1.500 17V7L8 1.500 14.500 7v10H10v-6H6v6z" /></svg></Tool>
            <Omnibox>
              <SiteInfo aria-label="Site information">
                <svg width="16" height="14" {...line}><circle cx="3.500" cy="3" r="2" /><path d="M8 3h7M1 11h7" /><circle cx="12.500" cy="11" r="2" /></svg>
              </SiteInfo>
              <Url>altashed.com<span>/contact/</span></Url>
              <StarButton aria-label="Bookmark">
                <svg width="20" height="20" viewBox="0 0 20 20" {...line} strokeWidth="1.700"><path d="M10 2l2.400 5.400 5.900.6-4.400 4 1.200 5.800L10 14.800 4.900 17.800l1.200-5.800-4.400-4 5.900-.6z" /></svg>
              </StarButton>
            </Omnibox>
            {extensions.map(([name, icon]) => (
              <Tool key={name} aria-label={name}>{icon}</Tool>
            ))}
            <ToolDivider />
            <Tool aria-label="Downloads"><svg width="20" height="20" {...line} strokeWidth="2.200"><path d="M10 0v12M5 8l5 5 5-5M1.500 13v5h17v-5" /></svg></Tool>
            <Tool aria-label="Profile"><Portrait size={24} /></Tool>
            <Tool aria-label="Menu"><svg width="4" height="18" fill="#474747"><circle cx="2" cy="2" r="2" /><circle cx="2" cy="9" r="2" /><circle cx="2" cy="16" r="2" /></svg></Tool>
          </Toolbar>
        </ToolbarBack>

        <Viewport>
          <Page>
            <Container>
              <Hero>
                <HeroKicker>اتصل بنا</HeroKicker>
                <HeroTitle>سعداء بخدمتكم</HeroTitle>
              </Hero>
              <Cards>
                <CardShadow>
                  <Card>
                    <CardIcon><svg width="64" height="64" viewBox="0 0 64 64"><g transform="translate(0 8)"><MailArt w={64} h={46} /></g></svg></CardIcon>
                    <CardBody>
                      <CardTitle>الإيميل</CardTitle>
                      <CardLine><MailLink href="mailto:info@altashed.com">info@altashed.com</MailLink></CardLine>
                    </CardBody>
                    <Watermark $right={0} $bottom={15}><MailArt w={88} h={63} /></Watermark>
                  </Card>
                </CardShadow>
                <CardShadow>
                  <Card $filled>
                    <CardIcon $filled><PhoneArt size={64} /></CardIcon>
                    <CardBody>
                      <CardTitle>الإتصال</CardTitle>
                      <PhoneLink href="tel:0590624911">0590624911</PhoneLink>
                      <PhoneLink href="tel:0533156044">0533156044</PhoneLink>
                    </CardBody>
                    <Watermark $right={0} $bottom={0} $filled><PhoneArt size={125} /></Watermark>
                  </Card>
                </CardShadow>
                <CardShadow>
                  <Card>
                    <CardIcon><PinArt size={64} /></CardIcon>
                    <CardBody>
                      <CardTitle>العنوان</CardTitle>
                      <CardLine>3882 عبد الله بن سليم , النسيم الشرقي</CardLine>
                      <CardLine>- الرياض, السعودية</CardLine>
                    </CardBody>
                    <Watermark $right={0} $bottom={0}><PinArt size={90} /></Watermark>
                  </Card>
                </CardShadow>
              </Cards>
              <MapPanel />
            </Container>
          </Page>
          <ScrollTrack>
            <ScrollArrow aria-label="Scroll up"><svg width="10" height="6" fill="#505050"><path d="M0 6l5-6 5 6z" /></svg></ScrollArrow>
            <ScrollThumb />
            <ScrollArrow aria-label="Scroll down"><svg width="10" height="6" fill="#505050"><path d="M0 0l5 6 5-6z" /></svg></ScrollArrow>
          </ScrollTrack>
        </Viewport>

        <ToTop aria-label="Back to top">
          <svg width="58" height="58" viewBox="0 0 58 58" fill="none">
            <circle cx="29" cy="29" r="27.500" stroke="#d0dffc" strokeWidth="2.500" />
            <path d="M29 1.500A27.500 27.500 0 0 1 55 20" stroke={orange} strokeWidth="2.500" />
            <path d="M23.500 32l5.500-5.500 5.500 5.500" stroke={orange} strokeWidth="4" strokeLinecap="round" />
          </svg>
        </ToTop>
        <ChatDock>
          <ChatHint>للتواصل عبر الواتس</ChatHint>
          <ChatButton href="#whatsapp" aria-label="WhatsApp"><FaWhatsapp size={43} /></ChatButton>
        </ChatDock>

        <Taskbar>
          <TaskLeft>
            <TaskCell aria-label="Widgets">
              <svg width="30" height="28" viewBox="0 0 30 28"><rect width="30" height="28" rx="3" fill="#0a62a8" /><rect x="2.500" y="2.500" width="13" height="23" rx="1" fill="#e9f6ff" /><rect x="17.500" y="2.500" width="10" height="11" rx="1" fill="#5fc8f5" /><rect x="17.500" y="15.500" width="10" height="10" rx="1" fill="#1c8fe0" /></svg>
            </TaskCell>
          </TaskLeft>
          <TaskCenter>
            <TaskCell aria-label="Start">
              <svg width="29" height="29" viewBox="0 0 29 29"><defs><linearGradient id="win" x2="1" y2="1"><stop stopColor="#4cc9fb" /><stop offset="1" stopColor="#0070cf" /></linearGradient></defs><path d="M0 0h14v14H0zM15 0h14v14H15zM0 15h14v14H0zM15 15h14v14H15z" fill="url(#win)" /></svg>
            </TaskCell>
            <SearchBox>
              <svg width="19" height="19" fill="none" stroke="#222" strokeWidth="2"><circle cx="11.500" cy="7.500" r="6.500" /><path d="M7 12l-6 6" /></svg>
              <SearchInput aria-label="Search" placeholder="Search" />
              <ZebraArt />
            </SearchBox>
            <TaskCell aria-label="Task view">
              <svg width="30" height="28" viewBox="0 0 30 28"><rect y="8" width="23" height="20" fill="#2f2f2f" /><rect x="8" width="22" height="20" fill="#f8f8f8" stroke="#ddd" strokeWidth=".6" /><path d="M8 8h15v12H8z" fill="#b4b4b4" /></svg>
            </TaskCell>
            <TaskCell aria-label="Chat">
              <svg width="29" height="28" viewBox="0 0 29 28"><defs><linearGradient id="chat" x1="0" y1="0.300" x2="1" y2="0.300"><stop stopColor="#8a5fa6" /><stop offset=".5" stopColor="#5d5bc8" /><stop offset="1" stopColor="#6d86ea" /></linearGradient></defs><path d="M14.500 0a14 14 0 1 1-6 27L0 28l1-8A14 14 0 0 1 14.500 0z" fill="url(#chat)" /><rect x="6" y="8" width="12" height="12" rx="2" fill="#fff" /><path d="M19 12l4-3v10l-4-3z" fill="#fff" /></svg>
            </TaskCell>
            <TaskCell aria-label="File Explorer">
              <svg width="30" height="27" viewBox="0 0 30 27"><path d="M0 2q0-2 2-2h8l4 4H0z" fill="#dd9f0e" /><path d="M0 5l13-1h15q2 0 2 2v20H0z" fill="#fdcb45" /><path d="M5 26v-5q0-2 2-2h16q2 0 2 2v5z" fill="#1584d6" /><path d="M9 23h12" stroke="#0b5b9c" strokeWidth="1.500" /></svg>
            </TaskCell>
            <TaskCell aria-label="Chrome" $active>
              <ChromeArt />
              <UserBadge $bg="#cdb9a6"><Portrait size={20} /></UserBadge>
            </TaskCell>
            <TaskCell aria-label="Visual Studio Code" $running><VscVscode size={30} color="#1f8ad2" /></TaskCell>
            <TaskCell aria-label="PowerShell">
              <svg width="29" height="22" viewBox="0 0 29 22"><path d="M6 0h22q1 0 1 1l-4 20q0 1-1 1H1q-1 0-1-1L4 1q0-1 2-1z" fill="#3f6fce" /><path d="M8 4l8 7-10 7M14 18h7" stroke="#fff" strokeWidth="2.300" fill="none" /></svg>
            </TaskCell>
            <TaskCell aria-label="Settings">
              <svg width="30" height="30" viewBox="0 0 30 30"><g fill="#7b848d"><circle cx="15" cy="15" r="12" />{[30, 90, 150].map((a) => <rect key={a} x="11" y="0" width="8" height="30" rx="2" transform={`rotate(${a} 15 15)`} />)}</g><circle cx="15" cy="15" r="7" fill="#e8ebee" /><circle cx="15" cy="15" r="5.300" fill="#0a5fb4" /></svg>
            </TaskCell>
            <TaskCell aria-label="Media player">
              <svg width="29" height="29" viewBox="0 0 29 29"><path d="M14.500 0a14.500 14.500 0 1 1 0 29H0V14.500A14.500 14.500 0 0 1 14.500 0z" fill="#0d8bf8" /><circle cx="14.500" cy="14.500" r="11" fill="#06173f" /><g fill="#21c1f5"><circle cx="14.500" cy="8" r="3" /><circle cx="21" cy="12.500" r="3" /><circle cx="18.500" cy="20" r="3" /><circle cx="10.500" cy="20" r="3" /><circle cx="8" cy="12.500" r="3" /><circle cx="14.500" cy="14.500" r="1.500" /></g></svg>
            </TaskCell>
            <TaskCell aria-label="Chrome profile" $running><ChromeArt /><UserBadge $bg="#2f6520">A</UserBadge></TaskCell>
            <TaskCell aria-label="ChatGPT" $running>
              <svg width="30" height="30" viewBox="0 0 30 30"><rect width="30" height="30" rx="4" fill="#12a383" /><g transform="translate(6 6)"><RiOpenaiFill size={18} color="#fff" /></g></svg>
              <UserBadge $bg="#2f6520">A</UserBadge>
            </TaskCell>
          </TaskCenter>
          <Tray>
            <TrayItem $w={35} aria-label="Hidden icons"><svg width="16" height="9" {...line} strokeWidth="1.500"><path d="M1 8l7-7 7 7" /></svg></TrayItem>
            <TrayItem $w={35} aria-label="Touch keyboard"><svg width="20" height="14" viewBox="0 0 20 14" fill="none" stroke="#222" strokeWidth="1.300"><rect x=".7" y=".7" width="18.600" height="12.600" rx="2" /><path d="M4 4h1M7 4h1M10 4h1M13 4h1M16 4h1M5 7h1M8 7h1M11 7h1M14 7h1M6 10h8" /></svg></TrayItem>
            <TrayItem $w={62}>ENG</TrayItem>
            <TrayItem $w={32} aria-label="Wi-Fi"><svg width="20" height="15" viewBox="0 0 20 15" fill="none" stroke="#222" strokeWidth="1.500"><path d="M1 6q9-9 18 0M4 9q6-6 12 0M6.500 12q3.500-3.500 7 0" /><circle cx="10" cy="13" r="1" fill="#222" /></svg></TrayItem>
            <TrayItem $w={27} aria-label="Volume"><svg width="20" height="16" viewBox="0 0 20 16" fill="none" stroke="#222" strokeWidth="1.400"><path d="M1 5.500h3l4-4v13l-4-4H1zM11 5q2 3 0 6M13.500 3q3.500 5 0 10" /><path d="M16 1q5 7 0 14" stroke="#bbb" /></svg></TrayItem>
            <Clock><span>٠٩:٠٠ م</span><span>٢٠٢٥/٠١/٣١</span></Clock>
            <NoticeBadge aria-label="2 notifications">2</NoticeBadge>
          </Tray>
        </Taskbar>
      </Shell>
    </>
  );
}
